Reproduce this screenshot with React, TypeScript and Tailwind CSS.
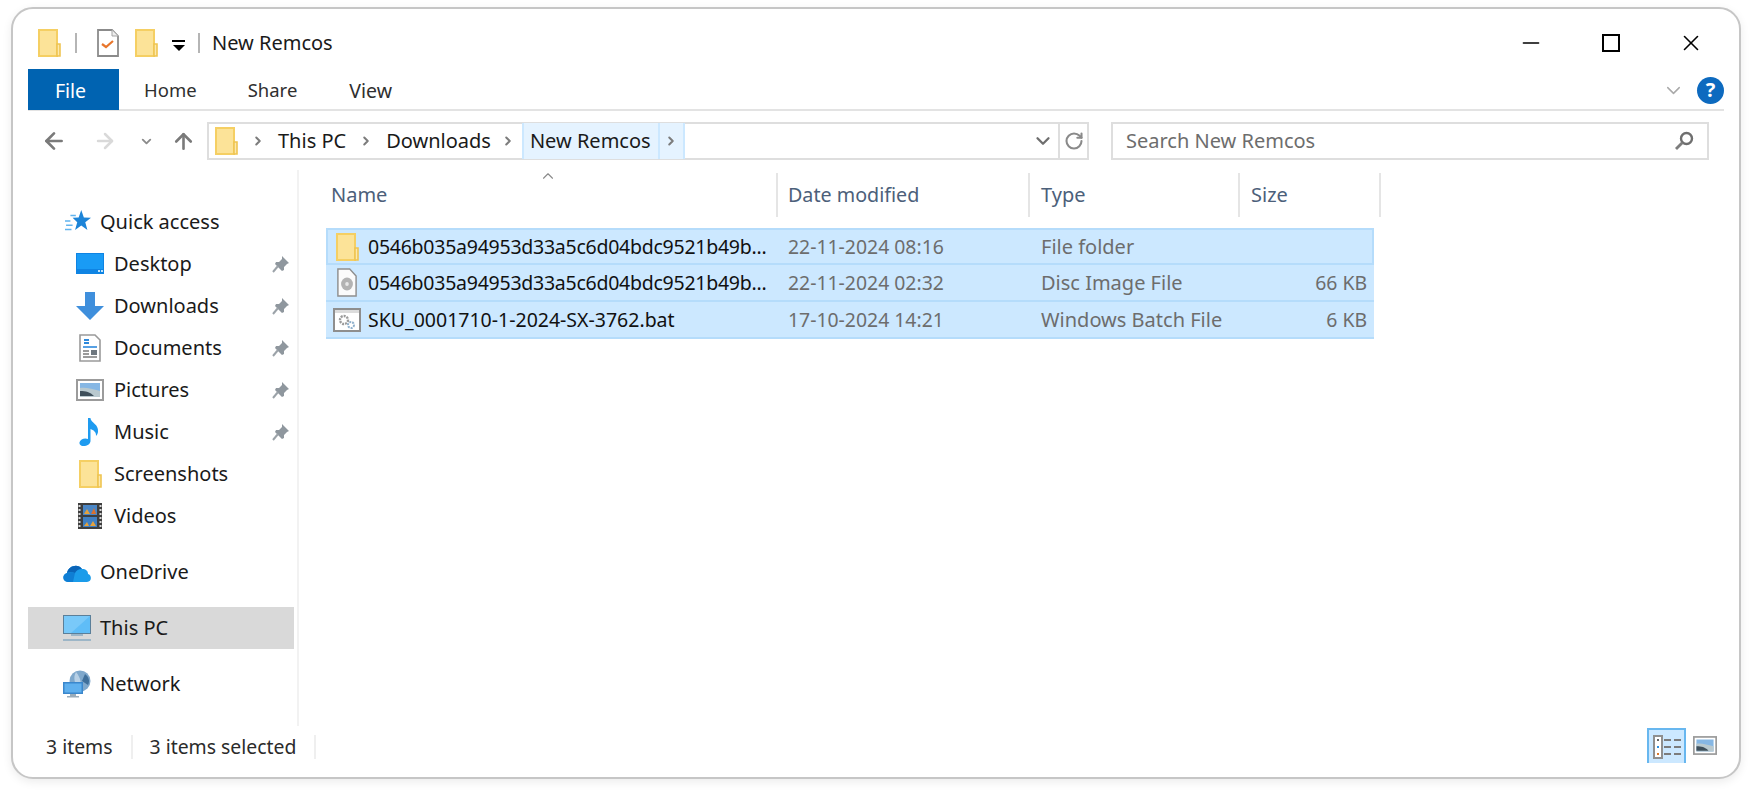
import { ArrowLeft, ArrowRight, ArrowUp, ChevronDown, ChevronRight, ChevronUp, RotateCw, Minus, X } from "lucide-react";

const font = { fontFamily: '"Noto Sans", "Liberation Sans", sans-serif' };

function Folder({ className }: { className: string }) {
  return (
    <svg viewBox="0 0 23 28" className={className}>
      <path d="M1 1h18v26H1z" fill="#fce398" stroke="#f5cf63" strokeWidth="2" />
      <path d="M19 15h3v12h-3z" fill="#fce9ae" stroke="#efc552" strokeWidth="1.6" />
    </svg>
  );
}

function Checklist() {
  return (
    <svg viewBox="0 0 22 28" className="w-[22px] h-[28px]">
      <path d="M1 1h14l6 6v20H1z" fill="#fff" stroke="#8b8b8b" strokeWidth="1.8" />
      <path d="M15 1v6h6" fill="#eee" stroke="#a5a5a5" />
      <path d="M5 15l4 3 7-6" fill="none" stroke="#e8762c" strokeWidth="2.2" />
    </svg>
  );
}

function Pin() {
  return (
    <svg viewBox="0 0 18 18" className="w-[18px] h-[18px]">
      <path d="M10 1l7 7-2 1-3 3 0 3-2 1-7-7 1-2 3 0 3-3z" fill="#8f979e" />
      <path d="M6 11l-5 6" stroke="#9ca3a9" strokeWidth="2" />
    </svg>
  );
}

function QuickIcon() {
  return (
    <svg viewBox="0 0 24 22" className="w-[26px] h-[24px]">
      <path d="M15 0l2.400 6.800 6.600.3-5.300 4.200 2 7-5.700-4-5.700 4 2-7-4.300-4.200 5.600-.3z" fill="#1c84d8" />
      <path d="M0 10h5M1 14h6M0 18h6M5 5h5" stroke="#62b4ee" strokeWidth="1.400" />
    </svg>
  );
}

function DesktopIcon() {
  return (
    <svg viewBox="0 0 28 22" className="w-[28px] h-[22px]">
      <rect width="28" height="21" fill="#0f84e3" />
      <rect x="1" y="1" width="26" height="15" fill="#199bf5" />
      <rect x="22" y="17" width="2" height="2" fill="#bfe3fb" />
      <rect x="25" y="17" width="2" height="2" fill="#bfe3fb" />
    </svg>
  );
}

function DownloadIcon() {
  return (
    <svg viewBox="0 0 28 28" className="w-[28px] h-[28px]">
      <path d="M9 0h10v14h9L14 28 0 14h9z" fill="#3f8fdc" />
    </svg>
  );
}

function DocumentIcon() {
  return (
    <svg viewBox="0 0 22 28" className="w-[22px] h-[28px]">
      <path d="M1 1h15l5 5v21H1z" fill="#fff" stroke="#9a9a9a" strokeWidth="1.6" />
      <path d="M5 6h5M5 9h5" stroke="#2d89dc" strokeWidth="2" />
      <path d="M4 13h14" stroke="#2d89dc" strokeWidth="1.6" />
      <path d="M4 17h6M4 20h6M4 23h14" stroke="#7b7b7b" strokeWidth="1.4" />
      <rect x="12" y="16" width="6" height="5" fill="#6f7880" />
    </svg>
  );
}

function PictureIcon({ className }: { className: string }) {
  return (
    <svg viewBox="0 0 28 22" className={className}>
      <rect x="1" y="1" width="26" height="20" fill="#fff" stroke="#9b9b9b" strokeWidth="2" />
      <rect x="4" y="4" width="20" height="14" fill="#86b7e4" />
      <path d="M4 9c6-1 12 1 20 3v6H4z" fill="#b9c9cf" />
      <path d="M4 12c6 0 10 1 14 5H4z" fill="#3e4f5b" />
    </svg>
  );
}

function MusicIcon() {
  return (
    <svg viewBox="0 0 22 28" className="w-[22px] h-[28px]">
      <path d="M9 0h2.400c.5 5 8.600 6 7.600 14-.3 2-1.200 3-2 4 .4-4-2.600-6-5.500-7v12c0 3-3.500 5-7 5-3 0-4.500-2-3.900-4 .7-2.600 5-4.500 8.400-3z" fill="#1e9bf0" />
    </svg>
  );
}

function VideoIcon() {
  return (
    <svg viewBox="0 0 24 26" className="w-[24px] h-[26px]">
      <rect width="24" height="26" fill="#3e3e3e" />
      <path d="M1.500 2v22M22.500 2v22" stroke="#d8d8d8" strokeWidth="2" strokeDasharray="2 2" />
      <rect x="5" y="2" width="14" height="10" fill="#4a86c5" />
      <rect x="5" y="14" width="14" height="10" fill="#3f7fc2" />
      <path d="M6 11l3-5 3 5zM12 23l3-5 3 5zM6 23l3-4 2 4z" fill="#e5a23c" />
      <path d="M13 11l3-6 2 6z" fill="#d96f2d" />
    </svg>
  );
}

function CloudIcon() {
  return (
    <svg viewBox="0 0 28 20" className="w-[28px] h-[20px]">
      <path d="M5 20c-6 0-6-8-1-9 1-7 11-10 15-4 4 0 6 2 6 5 4 1 4 8-1 8z" fill="#1b9cea" />
      <path d="M4 11c1-7 11-10 15-4-4 0-6 2-7 4-3-1-6-1-8 0z" fill="#0a64b8" />
      <path d="M4 11c3-1 6-1 8 0l-2 9H5c-6 0-6-8-1-9z" fill="#0f7ed4" />
    </svg>
  );
}

function PcIcon() {
  return (
    <svg viewBox="0 0 28 26" className="w-[28px] h-[26px]">
      <rect x=".5" y=".5" width="27" height="18" fill="#5fbdf7" stroke="#5b7f99" />
      <path d="M1 1h26L8 18H1z" fill="#8bd0fa" opacity=".6" />
      <rect x="8" y="19" width="12" height="2" fill="#9db6c7" />
      <rect y="24" width="28" height="2" fill="#9db6c7" />
    </svg>
  );
}

function NetworkIcon() {
  return (
    <svg viewBox="0 0 28 28" className="w-[28px] h-[28px]">
      <circle cx="17" cy="11" r="10.500" fill="#7fa8cc" />
      <path d="M13 2c-3 5-2 12 4 19 2-6 1-13-4-19z" fill="#b7d0e6" />
      <path d="M22 4l-3 7 6 4c2-4 1-8-3-11z" fill="#3f6f9b" />
      <rect y="12" width="20" height="12" fill="#3b87cc" />
      <rect x="1.500" y="13.500" width="17" height="9" fill="#5fb0ee" />
      <path d="M7 24h6v2h3v1.500H4V26h3z" fill="#9aacba" />
    </svg>
  );
}

function DiscFile() {
  return (
    <svg viewBox="0 0 22 29" className="w-[20px] h-[29px]" preserveAspectRatio="none">
      <path d="M1 1h13l7 7v20H1z" fill="#fbfbfb" stroke="#8f8f8f" strokeWidth="1.6" />
      <circle cx="11" cy="16" r="6.500" fill="#b3b3b3" />
      <circle cx="11" cy="16" r="2" fill="#e8e8e8" />
    </svg>
  );
}

function BatFile() {
  return (
    <svg viewBox="0 0 28 24" className="w-[28px] h-[24px]">
      <rect x="1" y="1" width="26" height="22" fill="#fff" stroke="#8e8e8e" strokeWidth="2" />
      <rect x="2" y="2" width="24" height="3" fill="#dcdcdc" />
      <circle cx="11" cy="12" r="4" fill="none" stroke="#9a9a9a" strokeWidth="2.400" strokeDasharray="2 1" />
      <circle cx="18" cy="17" r="3" fill="none" stroke="#8fb0cc" strokeWidth="2" strokeDasharray="2 1" />
    </svg>
  );
}

function SearchGlyph() {
  return (
    <svg viewBox="0 0 20 20" className="w-[20px] h-[20px]">
      <circle cx="12.500" cy="7.500" r="5.500" fill="none" stroke="#6f6f6f" strokeWidth="2.400" />
      <path d="M8.500 11.500L2 18" stroke="#7d7d7d" strokeWidth="2.800" />
    </svg>
  );
}

const quick = [
  { name: "Desktop", icon: <DesktopIcon />, pin: true },
  { name: "Downloads", icon: <DownloadIcon />, pin: true },
  { name: "Documents", icon: <DocumentIcon />, pin: true },
  { name: "Pictures", icon: <PictureIcon className="w-[28px] h-[22px]" />, pin: true },
  { name: "Music", icon: <MusicIcon />, pin: true },
  { name: "Screenshots", icon: <Folder className="w-[23px] h-[28px]" />, pin: false },
  { name: "Videos", icon: <VideoIcon />, pin: false },
];

const files = [
  { name: "0546b035a94953d33a5c6d04bdc9521b49b...", date: "22-11-2024 08:16", type: "File folder", size: "", icon: <Folder className="w-[23px] h-[28px]" />, focus: true, tight: true },
  { name: "0546b035a94953d33a5c6d04bdc9521b49b...", date: "22-11-2024 02:32", type: "Disc Image File", size: "66 KB", icon: <DiscFile />, focus: false, tight: true },
  { name: "SKU_0001710-1-2024-SX-3762.bat", date: "17-10-2024 14:21", type: "Windows Batch File", size: "6 KB", icon: <BatFile />, focus: false, tight: false },
];

function Crumb({ children }: { children: string }) {
  return (
    <>
      <ChevronRight size={14} strokeWidth={3.5} className="text-[#7d7d7d] mx-[13px]" />
      <span>{children}</span>
    </>
  );
}

export default function App() {
  return (
    <div className="w-[1752px] h-[794px] bg-white pt-[7px] pl-[11px] overflow-hidden text-[20px] leading-none" style={font}>
      <div className="w-[1730px] h-[772px] rounded-[22px] border-2 border-[#c6c6c6] bg-white shadow-[0_3px_10px_rgba(0,0,0,0.08)] flex flex-col overflow-hidden">
        {/* title bar */}
        <div className="h-[60px] flex items-center pl-[25px] pt-[8px] text-[#1a1a1a]">
          <Folder className="w-[23px] h-[28px]" />
          <div className="w-[2px] h-[20px] bg-[#b5b5b5] ml-[14px]" />
          <div className="ml-[20px]"><Checklist /></div>
          <div className="ml-[16px]"><Folder className="w-[23px] h-[28px]" /></div>
          <div className="ml-[14px] flex flex-col items-center gap-[3px] mt-[4px]">
            <div className="w-[13px] h-[2px] bg-black" />
            <div className="w-0 h-0 border-x-[6px] border-x-transparent border-t-[6px] border-t-black" />
          </div>
          <div className="w-[2px] h-[20px] bg-[#b5b5b5] ml-[13px]" />
          <span className="ml-[12px]">New Remcos</span>
          <div className="ml-auto flex items-center pr-[35px] gap-[54px]">
            <Minus size={26} strokeWidth={1.5} className="text-black" />
            <div className="w-[18px] h-[18px] border-2 border-black mx-[4px]" />
            <X size={26} strokeWidth={1.5} className="text-black" />
          </div>
        </div>
        {/* ribbon */}
        <div className="mx-[15px] h-[42px] border-b-2 border-[#e3e3e3] flex items-center text-[#2f2f2f] text-[18.500px]">
          <div className="w-[91px] h-[41px] bg-[#0063b1] text-white text-[19.500px] flex items-center justify-center pr-[6px] pt-[3px]">File</div>
          <span className="ml-[25px] pt-[3px]">Home</span>
          <span className="ml-[51px] pt-[3px]">Share</span>
          <span className="ml-[52px] pt-[3px] text-[19.500px]">View</span>
          <ChevronDown size={23} strokeWidth={1.5} className="ml-auto text-[#a9a9a9] mt-[2px]" />
          <div className="ml-[12px] w-[27px] h-[27px] rounded-full bg-[#0d6abf] text-white font-bold text-[20px] flex items-center justify-center mt-[2px]">?</div>
        </div>
        {/* address row */}
        <div className="h-[59px] flex items-center pl-[28px] pt-[1px]">
          <ArrowLeft size={26} strokeWidth={2.5} className="text-[#7a7a7a]" />
          <ArrowRight size={24} strokeWidth={2.5} className="ml-[26px] text-[#d9d9d9]" />
          <ChevronDown size={15} strokeWidth={3} className="ml-[22px] text-[#8c8c8c]" />
          <ArrowUp size={25} strokeWidth={2.5} className="ml-[17px] text-[#7a7a7a]" />
          <div className="ml-[11px] w-[882px] h-[38px] border-2 border-[#dedede] flex items-center text-[#1a1a1a]">
            <div className="ml-[6px]"><Folder className="w-[23px] h-[28px]" /></div>
            <Crumb>This PC</Crumb>
            <Crumb>Downloads</Crumb>
            <ChevronRight size={14} strokeWidth={3.5} className="text-[#7d7d7d] ml-[10px] mr-[7px]" />
            <div className="h-[36px] bg-[#e5f3ff] border-x-2 border-[#cce8ff] flex items-center">
              <span className="pl-[6px] w-[134px]">New Remcos</span>
              <div className="h-full w-[25px] border-l-2 border-[#cce8ff] flex items-center justify-center">
                <ChevronRight size={14} strokeWidth={3.5} className="text-[#7d7d7d]" />
              </div>
            </div>
            <ChevronDown size={22} strokeWidth={2.5} className="ml-auto text-[#6f6f6f]" />
            <div className="ml-[4px] h-full w-[29px] border-l-2 border-[#dedede] flex items-center justify-center">
              <RotateCw size={20} strokeWidth={2.5} className="text-[#8a8a8a]" />
            </div>
          </div>
          <div className="ml-[22px] w-[598px] h-[38px] border-2 border-[#dedede] flex items-center pl-[13px] pr-[13px] text-[#6d6d6d]">
            <span>Search New Remcos</span>
            <div className="ml-auto"><SearchGlyph /></div>
          </div>
        </div>
        {/* body */}
        <div className="flex-1 flex min-h-0">
          <div className="w-[286px] pl-[15px] pr-[3px] pt-[31px] border-r-2 border-[#f2f2f2] text-[#1a1a1a] flex flex-col shrink-0">
            <div className="h-[42px] flex items-center pl-[35px]">
              <div className="w-[28px] flex justify-end"><QuickIcon /></div>
              <span className="ml-[9px]">Quick access</span>
            </div>
            {quick.map((q) => (
              <div key={q.name} className="h-[42px] flex items-center pl-[48px] pr-[4px]">
                <div className="w-[28px] flex justify-center">{q.icon}</div>
                <span className="ml-[10px]">{q.name}</span>
                {q.pin && <div className="ml-auto"><Pin /></div>}
              </div>
            ))}
            <div className="h-[42px] mt-[14px] flex items-center pl-[35px]">
              <CloudIcon />
              <span className="ml-[9px]">OneDrive</span>
            </div>
            <div className="h-[42px] mt-[14px] flex items-center pl-[35px] bg-[#d9d9d9]">
              <PcIcon />
              <span className="ml-[9px]">This PC</span>
            </div>
            <div className="h-[42px] mt-[14px] flex items-center pl-[35px]">
              <NetworkIcon />
              <span className="ml-[9px]">Network</span>
            </div>
          </div>
          <div className="flex-1 pl-[27px] pt-[3px]">
            <div className="relative flex h-[44px] text-[#4c607a]">
              <ChevronUp size={18} strokeWidth={1.5} className="absolute left-[213px] -top-[6px] text-[#8a8a8a]" />
              <div className="w-[452px] border-r-2 border-[#e5e5e5] pl-[5px] flex items-center">Name</div>
              <div className="w-[252px] border-r-2 border-[#e5e5e5] pl-[10px] flex items-center text-[19.700px]">Date modified</div>
              <div className="w-[210px] border-r-2 border-[#e5e5e5] pl-[11px] flex items-center">Type</div>
              <div className="w-[141px] border-r-2 border-[#e5e5e5] pl-[11px] flex items-center">Size</div>
            </div>
            <div className="mt-[11px] w-[1048px]">
              {files.map((f) => (
                <div key={f.date} className={`h-[37px] flex items-center bg-[#cce8ff] border-b-2 border-[#b5dcfb] ${f.focus ? "border-2 border-[#99d1ff]" : ""}`}>
                  <div className={`w-[451px] flex items-center ${f.focus ? "-ml-[2px]" : ""}`}>
                    <div className="w-[42px] shrink-0 flex justify-center">{f.icon}</div>
                    <span className={`text-[#111] whitespace-nowrap text-[19.500px] ${f.tight ? "tracking-[-0.25px]" : ""}`}>{f.name}</span>
                  </div>
                  <div className="w-[252px] pl-[11px] text-[#6d6d6d] text-[19.400px]">{f.date}</div>
                  <div className="w-[210px] pl-[12px] text-[#6d6d6d]">{f.type}</div>
                  <div className="flex-1 pr-[7px] text-right text-[#6d6d6d] text-[19.400px]">{f.size}</div>
                </div>
              ))}
            </div>
          </div>
        </div>
        {/* status bar */}
        <div className="h-[51px] flex items-center pl-[33px] pb-[9px] text-[#2b2b2b] text-[19.400px]">
          <span>3 items</span>
          <div className="w-[2px] h-[24px] bg-[#efefef] ml-[18px]" />
          <span className="ml-[17px]">3 items selected</span>
          <div className="w-[2px] h-[24px] bg-[#efefef] ml-[18px]" />
          <div className="ml-auto mr-[22px] flex items-center gap-[7px] -mt-[3px]">
            <div className="w-[39px] h-[35px] bg-[#cce8ff] border-x-2 border-t-2 border-[#68b7ef] flex items-center justify-center">
              <svg viewBox="0 0 28 24" className="w-[28px] h-[24px]">
                <rect x="1" y="1" width="8" height="22" fill="#fff" stroke="#8f8f8f" strokeWidth="2" />
                <rect x="4" y="4" width="2" height="2" fill="#666" />
                <rect x="4" y="11" width="2" height="2" fill="#2d8fe0" />
                <rect x="4" y="18" width="2" height="2" fill="#d9772b" />
                <path d="M11 5h7M21 5h7M11 12h7M21 12h7M11 19h7M21 19h7" stroke="#7c7c7c" strokeWidth="2" />
              </svg>
            </div>
            <PictureIcon className="w-[24px] h-[19px]" />
          </div>
        </div>
      </div>
    </div>
  );
}
